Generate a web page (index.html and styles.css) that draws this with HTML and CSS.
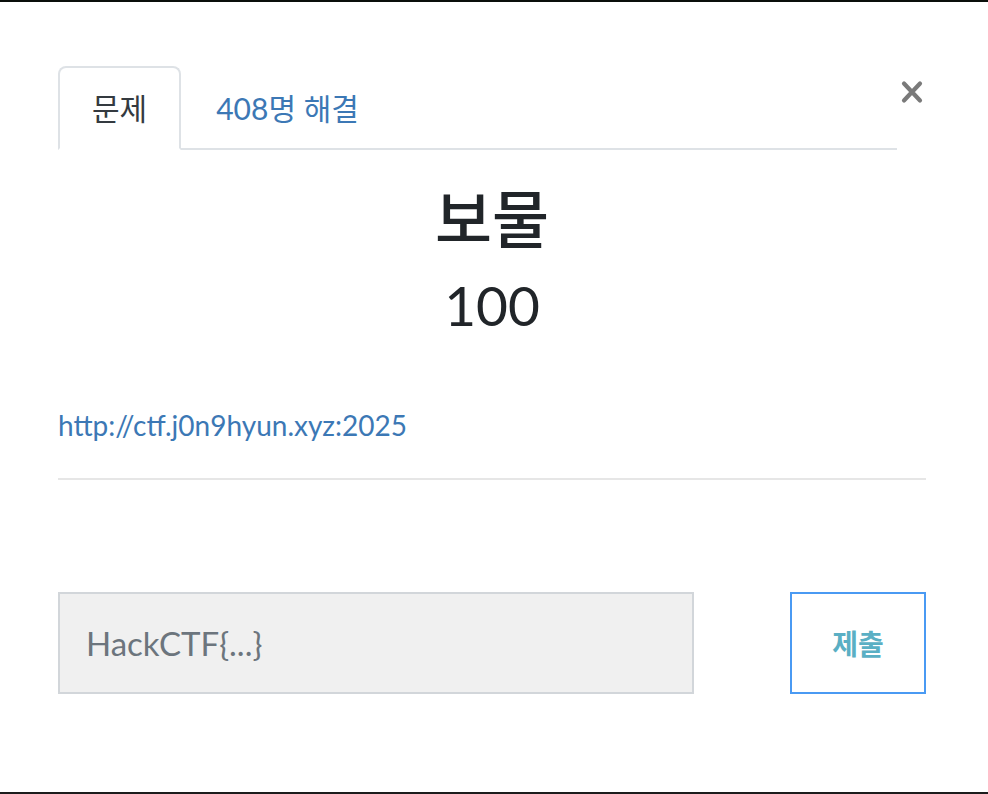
FILE: index.html
```html
<!DOCTYPE html>
<html lang="ko">
<head>
  <meta charset="UTF-8" />
  <meta name="viewport" content="width=device-width, initial-scale=1.0"/>
  <title>보물</title>

  <link rel="stylesheet" href="styles.css">
</head>

<body>
  <div class="screen">
    <div class="modal">
      <header class="modal-header">
        <ul class="tabs">
          <li class="tab active">문제</li>
          <li class="tab"><a href="#">408명 해결</a></li>
        </ul>
        <button class="close" type="button" aria-label="Close">
          <svg width="22" height="24" viewBox="0 0 22 24">
            <path d="M3 3.5L19 20.5M19 3.5L3 20.5" stroke="#7a7a7a" stroke-width="4.2" stroke-linecap="round" fill="none"/>
          </svg>
        </button>
      </header>

      <main>
        <h2 class="title">보물</h2>
        <h3 class="points">100</h3>
        <p class="desc"><a href="#">http://ctf.j0n9hyun.xyz:2025</a></p>
        <hr />

        <form class="flag-form">
          <input type="text" name="flag" placeholder="HackCTF{...}" />
          <button type="submit">제출</button>
        </form>
      </main>
    </div>
  </div>
</body>
</html>
```

FILE: styles.css
```css
body {
  margin: 0;
  background: #fff;
  font-family: Lato, "Noto Sans CJK KR", sans-serif;
  color: #212529;
}

.screen {
  height: 794px;
  box-sizing: border-box;
  border-top: 2px solid #0a0f0b;
  border-bottom: 2px solid #1c1c1c;
}

.modal {
  padding: 0 62px 0 58px;
}

.modal-header {
  display: flex;
  align-items: flex-start;
  padding-top: 64px;
}

.tabs {
  flex: 1;
  display: flex;
  list-style: none;
  margin: 0;
  padding: 0;
  border-bottom: 2px solid #dee2e6;
}

.tab {
  font-size: 30px;
  line-height: 36px;
  padding: 22px 32px;
  margin-bottom: -2px;
  border: 2px solid transparent;
  border-radius: 8px 8px 0 0;
}

.tab.active {
  color: #343a40;
  border-color: #dee2e6 #dee2e6 #fff;
  background: #fff;
}

.tab a {
  margin-left: 1px;
  color: #3c78b5;
  text-decoration: none;
}

.close {
  width: 29px;
  margin-top: 14px;
  padding: 0;
  background: none;
  border: none;
  display: flex;
  justify-content: center;
  cursor: pointer;
}

.title {
  margin: 32px 0 0;
  font-size: 62px;
  line-height: 1.2;
  font-weight: 500;
  text-align: center;
}

.points {
  margin: 16px 0 0;
  font-size: 55px;
  line-height: 1.2;
  font-weight: 400;
  text-align: center;
}

.desc {
  margin: 66px 0 0;
  font-size: 28px;
  line-height: 42px;
}

.desc a {
  color: #3c78b5;
  text-decoration: none;
}

hr {
  margin: 32px 0 0;
  border: none;
  border-top: 2px solid #e6e6e6;
}

.flag-form {
  display: flex;
  gap: 96px;
  margin-top: 112px;
}

.flag-form input {
  flex: 1;
  height: 102px;
  box-sizing: border-box;
  padding: 0 26px;
  font-family: Lato, "Noto Sans CJK KR", sans-serif;
  font-size: 33px;
  color: #495057;
  background: #f0f0f0;
  border: 2px solid #d2d6da;
  border-radius: 0;
  outline: none;
}

.flag-form input::placeholder {
  color: #6c757d;
}

.flag-form button {
  width: 136px;
  height: 102px;
  box-sizing: border-box;
  font-family: Lato, "Noto Sans CJK KR", sans-serif;
  font-size: 28px;
  font-weight: 700;
  color: #5aafc4;
  background: #fff;
  border: 2px solid #4a9af3;
  border-radius: 0;
  cursor: pointer;
}
```
